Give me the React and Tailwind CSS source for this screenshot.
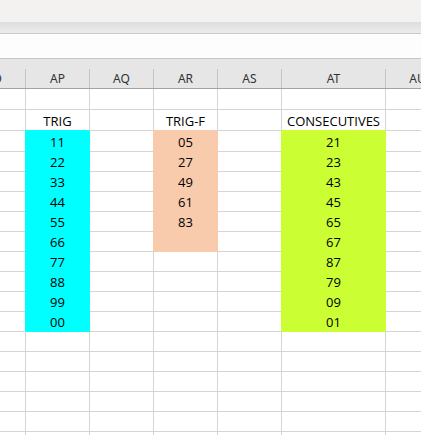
const columns = [
  { name: "AO", width: "w-[64px]" },
  { name: "AP", width: "w-[64px]" },
  { name: "AQ", width: "w-[64px]" },
  { name: "AR", width: "w-[64px]" },
  { name: "AS", width: "w-[64px]" },
  { name: "AT", width: "w-[104px]" },
  { name: "AU", width: "w-[64px]" },
];

const trig = ["11", "22", "33", "44", "55", "66", "77", "88", "99", "00"];
const trigF = ["05", "27", "49", "61", "83", ""];
const consecutives = ["21", "23", "43", "45", "65", "67", "87", "79", "09", "01"];

const fills = {
  cyan: "bg-[#00ffff] border-[#00ffff] shadow-[-1px_-1px_0_#00ffff]",
  peach: "bg-[#f8cbad] border-[#f8cbad] shadow-[-1px_-1px_0_#f8cbad]",
  lime: "bg-[#ccff33] border-[#ccff33] shadow-[-1px_-1px_0_#ccff33]",
};

// row heights (bottom gridline included)
const rowHeights = [
  "h-[21px]", "h-[21px]", "h-[21px]", "h-[20px]", "h-[20px]", "h-[20px]",
  "h-[20px]", "h-[20px]", "h-[20px]", "h-[20px]", "h-[20px]", "h-[20px]",
  "h-[20px]", "h-[20px]", "h-[20px]", "h-[20px]", "h-[20px]", "h-[20px]",
];

function buildRows() {
  return rowHeights.map((h, r) => {
    const cells = columns.map(() => ({ text: "", fill: null }));
    if (r === 1) {
      cells[1].text = "TRIG";
      cells[3].text = "TRIG-F";
      cells[5].text = "CONSECUTIVES";
    }
    const i = r - 2;
    if (i >= 0 && i < trig.length) {
      cells[1] = { text: trig[i], fill: "cyan" };
      cells[5] = { text: consecutives[i], fill: "lime" };
    }
    if (i >= 0 && i < trigF.length) {
      cells[3] = { text: trigF[i], fill: "peach" };
    }
    return { h, cells };
  });
}

function Cell({ col, cell, h }) {
  const fill = cell.fill ? fills[cell.fill] : "border-[#d4d4d4]";
  return (
    <div
      className={`${col.width} ${h} shrink-0 box-border border-r border-b ${fill} flex items-end justify-center pb-[2px] text-[13px] leading-none text-black`}
    >
      {cell.text}
    </div>
  );
}

export default function App() {
  const rows = buildRows();

  return (
    <div className="w-[421px] h-[435px] overflow-hidden bg-white font-['Open_Sans','Noto_Sans',sans-serif]">
      <div className="h-[22px] bg-[#f3f2f1]" />
      <div className="h-[12px] box-border bg-gradient-to-b from-[#dedede] to-[#ececec] border-b border-[#c8c8c8]" />
      <div className="h-[25px] box-border bg-[#fdfdfd] border-b border-[#c6c6c6]" />
      <div className="h-[10px] bg-[#e6e6e6]" />

      <div className="ml-[-38px] w-[488px]">
        <div className="flex h-[20px] bg-[#e6e6e6] border-b border-[#a3a3a3] box-border">
          {columns.map((col) => (
            <div
              key={col.name}
              className={`${col.width} shrink-0 box-border border-r border-[#c4c4c4] flex items-center justify-center text-[12px] text-[#333] font-['Noto_Sans',sans-serif]`}
            >
              {col.name}
            </div>
          ))}
        </div>

        {rows.map((row, r) => (
          <div key={r} className="flex">
            {columns.map((col, c) => (
              <Cell key={col.name} col={col} cell={row.cells[c]} h={row.h} />
            ))}
          </div>
        ))}
      </div>
    </div>
  );
}
